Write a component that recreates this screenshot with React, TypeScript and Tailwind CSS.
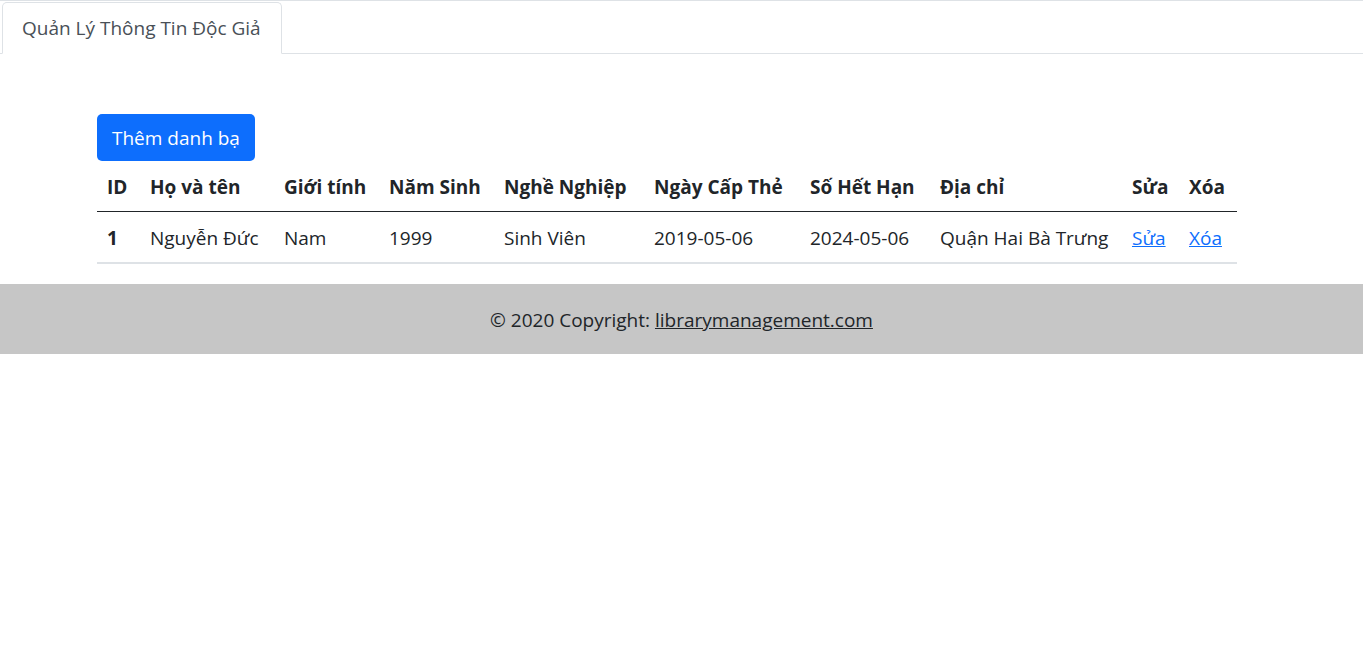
export default function App() {
  const cols = [
    { label: "ID", w: "w-[43px]" },
    { label: "Họ và tên", w: "w-[134px]" },
    { label: "Giới tính", w: "w-[105px]" },
    { label: "Năm Sinh", w: "w-[115px]" },
    { label: "Nghề Nghiệp", w: "w-[150px]" },
    { label: "Ngày Cấp Thẻ", w: "w-[156px]" },
    { label: "Số Hết Hạn", w: "w-[130px]" },
    { label: "Địa chỉ", w: "w-[192px]" },
    { label: "Sửa", w: "w-[57px]" },
    { label: "Xóa", w: "w-[58px]" },
  ];

  return (
    <div className="min-h-[654px] bg-white text-[#212529] text-[20px] leading-[30px] font-['Open_Sans','Noto_Sans',sans-serif]">
      {/* Tabs */}
      <div className="border-t border-[#dee2e6] pt-px">
        <ul className="flex border-b border-[#dee2e6] pl-[2px]">
          <li className="-mb-px">
            <a className="block pl-[19px] pr-[20px] py-[10px] border border-[#dee2e6] border-b-white rounded-t-[5px] bg-white text-[#495057] text-[19px]">
              Quản Lý Thông Tin Độc Giả
            </a>
          </li>
        </ul>
      </div>

      <div className="pl-[97px] pt-[60px]">
        <div className="w-[1140px]">
          <button className="h-[47px] bg-[#0d6efd] text-white rounded-[5px] px-[15px] leading-[30px] text-[19px] pt-px">
            Thêm danh bạ
          </button>

          <table className="table-fixed w-[1140px] border-collapse mb-[20px]">
            <thead>
              <tr className="border-b border-[#212529]">
                {cols.map((c) => (
                  <th key={c.label} className={`${c.w} text-left font-bold px-[10px] pt-[11px] pb-[9px] whitespace-nowrap text-[19px]`}>
                    {c.label}
                  </th>
                ))}
              </tr>
            </thead>
            <tbody>
              <tr className="border-b-2 border-[#dee2e6]">
                <th className="text-left font-bold px-[10px] pt-[11px] pb-[9px] text-[19px]">1</th>
                <td className="px-[10px] pt-[11px] pb-[9px] whitespace-nowrap text-[19px]">Nguyễn Đức</td>
                <td className="px-[10px] pt-[11px] pb-[9px] whitespace-nowrap text-[19px]">Nam</td>
                <td className="px-[10px] pt-[11px] pb-[9px] whitespace-nowrap text-[19px]">1999</td>
                <td className="px-[10px] pt-[11px] pb-[9px] whitespace-nowrap text-[19px]">Sinh Viên</td>
                <td className="px-[10px] pt-[11px] pb-[9px] whitespace-nowrap text-[19px]">2019-05-06</td>
                <td className="px-[10px] pt-[11px] pb-[9px] whitespace-nowrap text-[19px]">2024-05-06</td>
                <td className="px-[10px] pt-[11px] pb-[9px] whitespace-nowrap text-[19px]">Quận Hai Bà Trưng</td>
                <td className="px-[10px] pt-[11px] pb-[9px] whitespace-nowrap text-[19px]">
                  <a className="text-[#0d6efd] underline">Sửa</a>
                </td>
                <td className="px-[10px] pt-[11px] pb-[9px] whitespace-nowrap text-[19px]">
                  <a className="text-[#0d6efd] underline">Xóa</a>
                </td>
              </tr>
            </tbody>
          </table>
        </div>
      </div>

      <footer className="bg-[#c6c6c6] pt-[21px] pb-[19px] text-center text-[19px]">
        © 2020 Copyright: <a className="text-[#212529] underline">librarymanagement.com</a>
      </footer>
    </div>
  );
}
